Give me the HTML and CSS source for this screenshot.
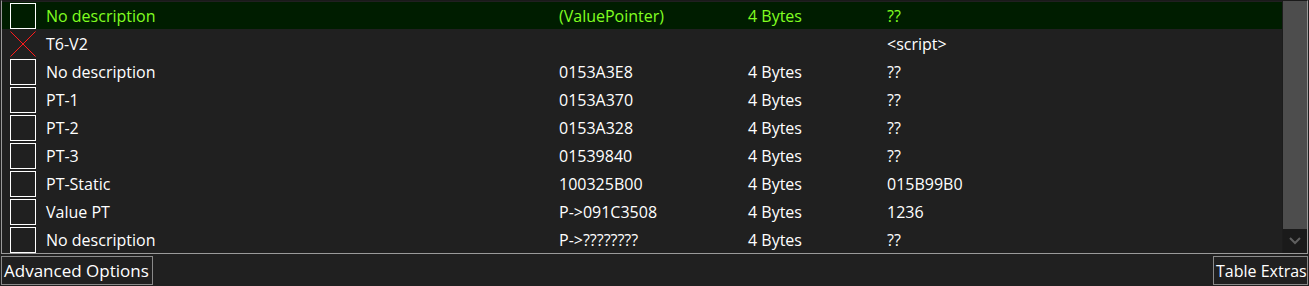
FILE: index.html
```
<!DOCTYPE html>
<html lang="en">
<head>
    <meta charset="UTF-8">
    <title>Cheat Table</title>
    <link rel="stylesheet" href="styles.css">
</head>
<body>
    <div class="table-panel">
        <div class="rows">
            <div class="row selected">
                <span class="check"></span>
                <span class="col desc">No description</span>
                <span class="col addr">(ValuePointer)</span>
                <span class="col type">4 Bytes</span>
                <span class="col value">??</span>
            </div>
            <div class="row">
                <span class="check script">
                    <svg width="26" height="26" viewBox="0 0 26 26"><path d="M0.5 0.5 L25.5 25.5 M25.5 0.5 L0.5 25.5" stroke="#ff1a1a" stroke-width="1" fill="none"/></svg>
                </span>
                <span class="col desc">T6-V2</span>
                <span class="col addr"></span>
                <span class="col type"></span>
                <span class="col value">&lt;script&gt;</span>
            </div>
            <div class="row">
                <span class="check"></span>
                <span class="col desc">No description</span>
                <span class="col addr">0153A3E8</span>
                <span class="col type">4 Bytes</span>
                <span class="col value">??</span>
            </div>
            <div class="row">
                <span class="check"></span>
                <span class="col desc">PT-1</span>
                <span class="col addr">0153A370</span>
                <span class="col type">4 Bytes</span>
                <span class="col value">??</span>
            </div>
            <div class="row">
                <span class="check"></span>
                <span class="col desc">PT-2</span>
                <span class="col addr">0153A328</span>
                <span class="col type">4 Bytes</span>
                <span class="col value">??</span>
            </div>
            <div class="row">
                <span class="check"></span>
                <span class="col desc">PT-3</span>
                <span class="col addr">01539840</span>
                <span class="col type">4 Bytes</span>
                <span class="col value">??</span>
            </div>
            <div class="row">
                <span class="check"></span>
                <span class="col desc">PT-Static</span>
                <span class="col addr">100325B00</span>
                <span class="col type">4 Bytes</span>
                <span class="col value">015B99B0</span>
            </div>
            <div class="row">
                <span class="check"></span>
                <span class="col desc">Value PT</span>
                <span class="col addr">P-&gt;091C3508</span>
                <span class="col type">4 Bytes</span>
                <span class="col value">1236</span>
            </div>
            <div class="row">
                <span class="check"></span>
                <span class="col desc">No description</span>
                <span class="col addr">P-&gt;????????</span>
                <span class="col type">4 Bytes</span>
                <span class="col value">??</span>
            </div>
        </div>
        <div class="scrollbar">
            <div class="thumb"></div>
            <div class="arrow">
                <svg width="12" height="8" viewBox="0 0 12 8"><path d="M1 1 L6 6 L11 1" stroke="#5f5f5f" stroke-width="2" fill="none"/></svg>
            </div>
        </div>
    </div>

    <div class="bottom-bar">
        <button class="bar-btn advanced">Advanced Options</button>
        <button class="bar-btn extras">Table Extras</button>
    </div>
</body>
</html>
```

FILE: styles.css
```
* {
    margin: 0;
    padding: 0;
    box-sizing: border-box;
}

body {
    background: #202020;
    font-family: 'Open Sans', 'Noto Sans', Arial, sans-serif;
    font-size: 16px;
    color: #ffffff;
    width: 1309px;
    height: 286px;
    overflow: hidden;
}

/* Address list */
.table-panel {
    display: flex;
    height: 254px;
    margin: 0 1px;
    border-left: 1px solid #9a9a9a;
    border-right: 1px solid #9a9a9a;
    border-bottom: 1px solid #9a9a9a;
    border-top: 1px solid #1a1a1a;
}

.rows {
    flex-grow: 1;
    padding-top: 1px;
}

.row {
    display: flex;
    align-items: center;
    height: 28px;
}

.row.selected {
    background: #001d00;
    color: #80ff20;
    height: 27px;
    margin-bottom: 1px;
}

.check {
    width: 26px;
    height: 26px;
    margin-left: 8px;
    margin-right: 10px;
    border: 1px solid #ffffff;
    flex-shrink: 0;
}

.check.script {
    border: none;
}

.check svg {
    display: block;
}

.col {
    white-space: nowrap;
}

.desc {
    width: 513px;
}

.addr {
    width: 189px;
}

.type {
    width: 139px;
}

.scrollbar {
    width: 25px;
    display: flex;
    flex-direction: column;
    background: #1a1a1a;
    border-left: 1px solid #1c1c1c;
}

.thumb {
    flex-grow: 1;
    background: #4d4d4d;
}

.arrow {
    height: 24px;
    display: flex;
    align-items: center;
    justify-content: center;
}

.arrow svg {
    display: block;
}

/* Bottom buttons */
.bottom-bar {
    display: flex;
    justify-content: space-between;
    padding: 2px 1px 0 1px;
}

.bar-btn {
    font-family: inherit;
    font-size: 17px;
    color: #ffffff;
    background: #202020;
    border: 1px solid #8a8a8a;
    height: 29px;
    padding: 0 2px;
    text-align: left;
    white-space: nowrap;
}

.advanced {
    width: 152px;
}

.extras {
    width: 95px;
    font-size: 16px;
}
```
